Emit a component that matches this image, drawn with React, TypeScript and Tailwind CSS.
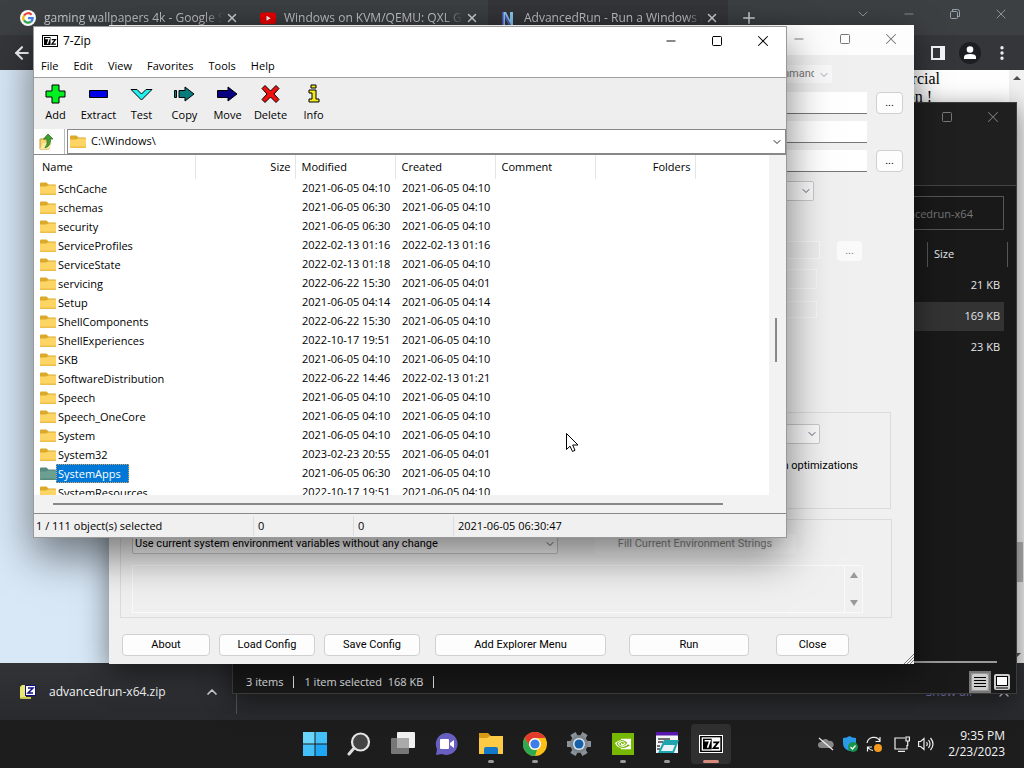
import React from 'react';
import { ArrowLeft, ChevronDown, ChevronUp, Minus, MoreVertical, Plus, Square, X } from 'lucide-react';
import { SiNvidia } from 'react-icons/si';

const browserTabs = [
  { title: 'gaming wallpapers 4k - Google S', icon: 'google', active: false },
  { title: 'Windows on KVM/QEMU: QXL G', icon: 'youtube', active: false },
  { title: 'AdvancedRun - Run a Windows p', icon: 'nirsoft', active: true }
];

const menus = ['File', 'Edit', 'View', 'Favorites', 'Tools', 'Help'];

const folders = [
  { name: 'SchCache', modified: '2021-06-05 04:10', created: '2021-06-05 04:10' },
  { name: 'schemas', modified: '2021-06-05 06:30', created: '2021-06-05 04:10' },
  { name: 'security', modified: '2021-06-05 06:30', created: '2021-06-05 04:10' },
  { name: 'ServiceProfiles', modified: '2022-02-13 01:16', created: '2022-02-13 01:16' },
  { name: 'ServiceState', modified: '2022-02-13 01:18', created: '2021-06-05 04:10' },
  { name: 'servicing', modified: '2022-06-22 15:30', created: '2021-06-05 04:01' },
  { name: 'Setup', modified: '2021-06-05 04:14', created: '2021-06-05 04:14' },
  { name: 'ShellComponents', modified: '2022-06-22 15:30', created: '2021-06-05 04:10' },
  { name: 'ShellExperiences', modified: '2022-10-17 19:51', created: '2021-06-05 04:10' },
  { name: 'SKB', modified: '2021-06-05 04:10', created: '2021-06-05 04:10' },
  { name: 'SoftwareDistribution', modified: '2022-06-22 14:46', created: '2022-02-13 01:21' },
  { name: 'Speech', modified: '2021-06-05 04:10', created: '2021-06-05 04:10' },
  { name: 'Speech_OneCore', modified: '2021-06-05 04:10', created: '2021-06-05 04:10' },
  { name: 'System', modified: '2021-06-05 04:10', created: '2021-06-05 04:10' },
  { name: 'System32', modified: '2023-02-23 20:55', created: '2021-06-05 04:01' },
  { name: 'SystemApps', modified: '2021-06-05 06:30', created: '2021-06-05 04:10', selected: true },
  { name: 'SystemResources', modified: '2022-10-17 19:51', created: '2021-06-05 04:10' }
];

const GoogleIcon = () => (
  <svg viewBox="0 0 16 16" className="h-4 w-4 shrink-0">
    <circle cx="8" cy="8" r="8" fill="#fff" />
    <g fill="none" strokeWidth="2.2">
      <path d="M11.6 4.8A4.7 4.7 0 0 0 4 5.6" stroke="#ea4335" />
      <path d="M4 5.5a4.7 4.7 0 0 0 0 5" stroke="#fbbc05" />
      <path d="M4 10.4a4.7 4.7 0 0 0 7 1.2" stroke="#34a853" />
      <path d="M8 8.2h4.7a4.7 4.7 0 0 1-1.7 3.4" stroke="#4285f4" />
    </g>
  </svg>
);

const YoutubeIcon = () => (
  <svg viewBox="0 0 16 16" className="h-4 w-4 shrink-0">
    <rect y="2.5" width="16" height="11.5" rx="3" fill="#f00000" />
    <path d="M6.5 5.8v5L10.7 8.3z" fill="#fff" />
  </svg>
);

const NirsoftIcon = () => (
  <svg viewBox="0 0 16 16" className="h-4 w-4 shrink-0">
    <path d="M2 15V2h4l4 8V2h3v13h-4L5 7.500V15z" fill="#8cc8f4" />
    <path d="M2 15V2h1.500v13zM5 7.500V4l6 11H9z" fill="#4a55b8" />
  </svg>
);

const SevenZipIcon = ({ className }: { className: string }) => (
  <svg viewBox="0 0 16 12" className={className}>
    <rect width="16" height="12" fill="#000" />
    <rect x="1" y="1" width="14" height="10" fill="#fff" />
    <rect x="2" y="2" width="6.5" height="8" fill="#000" />
    <path d="M3.2 3.6h4l-1.8 5.2" fill="none" stroke="#fff" strokeWidth="1.2" />
    <path d="M9.7 4.7h3.7l-3.5 4.4h4" fill="none" stroke="#000" strokeWidth="1.3" />
  </svg>
);

const FolderIcon = ({ selected = false }: { selected?: boolean }) => (
  <svg viewBox="0 0 16 13" className="h-[13px] w-4 shrink-0">
    <path d="M0 1.500Q0 .5 1 .5h5.500l2 2H15q1 0 1 1V6H0z" fill={selected ? '#568b80' : '#dda92a'} />
    <path d="M0 4.500h6l2-1h8V12q0 1-1 1H1q-1 0-1-1z" fill={selected ? '#6ba091' : '#fcd564'} />
    <path d="M0 11.500h16V12q0 1-1 1H1q-1 0-1-1z" fill={selected ? '#558a7c' : '#efbd49'} />
  </svg>
);

const tools = [
  { label: 'Add', icon: <path d="M11 1h7v6h6v6h-6v6h-7v-6H5V7h6z" fill="#00f020" /> },
  { label: 'Extract', icon: <path d="M5.500 6.500h18v7h-18z" fill="#0000e8" /> },
  { label: 'Test', icon: <path d="M4 5.500h6l4.500 4.500L19 5.500h6L14.500 16z" fill="#20f0f0" /> },
  { label: 'Copy', icon: <path d="M4.500 6.500h2v7h-2zM9 6.500h6V3l9 7-9 7v-3.500H9z" fill="#087c7c" /> },
  { label: 'Move', icon: <path d="M4.500 6.500H15V3l9 7-9 7v-3.500H4.500z" fill="#080080" /> },
  { label: 'Delete', icon: <path d="M6 4.500l3-3 5.500 5.500L20 1.500l3 3-5 5.500 5 5.500-3 3-5.500-5.500L9 18.500l-3-3 5-5.500z" fill="#f01010" /> },
  { label: 'Info', icon: <path d="M12 1h5v3h-5zM10 6h7v9h3v3H10v-3h3V9h-3z" fill="#f0e820" /> }
];

const WindowButtons = ({ muted = false }: { muted?: boolean }) => (
  <div className={`flex ${muted ? 'text-[#777]' : 'text-black'}`}>
    <button aria-label="Minimize" className="flex h-7 w-[46px] items-center justify-center">
      <Minus className="h-3.5 w-3.5" strokeWidth={1.6} />
    </button>
    <button aria-label="Maximize" className="flex h-7 w-[46px] items-center justify-center">
      <Square className="h-3 w-3" strokeWidth={2} />
    </button>
    <button aria-label="Close" className="flex h-7 w-[46px] items-center justify-center">
      <X className="h-[18px] w-[18px]" strokeWidth={1.4} />
    </button>
  </div>
);

const Browser: React.FC = () => (
  <div className="flex min-h-0 flex-1 flex-col bg-[#35363a]">
    <header className="flex h-[35px] shrink-0 justify-between bg-[#3c4043] pl-2">
      <div className="flex">
        {browserTabs.map((tab) => (
          <div
            key={tab.title}
            className={`flex w-60 items-center pr-[9px] pl-3 ${tab.active ? 'bg-[#35363a]' : ''}`}
          >
            {tab.icon === 'google' && <GoogleIcon />}
            {tab.icon === 'youtube' && <YoutubeIcon />}
            {tab.icon === 'nirsoft' && <NirsoftIcon />}
            <span className="ml-2 flex-1 overflow-hidden mask-r-from-90% text-xs whitespace-nowrap text-[#c4c7ca]">
              {tab.title}
            </span>
            <button aria-label="Close tab" className="ml-0.5 text-gray-300">
              <X className="h-3.5 w-3.5" strokeWidth={2.5} />
            </button>
          </div>
        ))}
        <button aria-label="New tab" className="ml-3 text-gray-300">
          <Plus className="h-[18px] w-[18px]" />
        </button>
      </div>
      <div className="flex h-7 text-gray-400">
        <button aria-label="Search tabs" className="flex w-[46px] items-center justify-center">
          <ChevronDown className="h-4 w-4" strokeWidth={1.3} />
        </button>
        <button aria-label="Minimize browser" className="flex w-[46px] items-center justify-center">
          <Minus className="h-3.5 w-3.5" strokeWidth={1.3} />
        </button>
        <button aria-label="Restore browser" className="flex w-[46px] items-center justify-center">
          <svg viewBox="0 0 10 10" className="h-2.5 w-2.5" fill="none" stroke="currentColor">
            <path d="M2.500 2V.5h5q2 0 2 2v5H8" />
            <rect x=".5" y="2.5" width="7" height="7" rx="1" />
          </svg>
        </button>
        <button aria-label="Close browser" className="flex w-[46px] items-center justify-center">
          <X className="h-4 w-4" strokeWidth={1.3} />
        </button>
      </div>
    </header>

    <div className="flex h-[35px] shrink-0 items-center justify-between pr-1.5 pl-3 text-gray-100">
      <button aria-label="Back">
        <ArrowLeft className="h-5 w-5" strokeWidth={2.5} />
      </button>
      <div className="flex">
        <button aria-label="Side panel" className="flex w-8 items-center justify-center">
          <svg viewBox="0 0 14 14" className="h-3.5 w-3.5">
            <path d="M0 0h14v14H0zM2 2v10h7V2z" fill="currentColor" fillRule="evenodd" />
          </svg>
        </button>
        <button aria-label="Profile" className="flex w-8 items-center justify-center">
          <svg viewBox="0 0 22 22" className="h-[22px] w-[22px]">
            <circle cx="11" cy="11" r="11" fill="#1d1e21" />
            <circle cx="11" cy="7.5" r="3.3" fill="#fff" />
            <path d="M5 17v-2q0-3 6-3t6 3v2z" fill="#fff" />
          </svg>
        </button>
        <button aria-label="Browser menu" className="flex w-8 items-center justify-center">
          <MoreVertical className="h-[18px] w-[18px]" strokeWidth={2.5} />
        </button>
      </div>
    </div>

    <div className="flex min-h-0 flex-1 bg-white">
      <div className="w-40 shrink-0 bg-[#d8e8f7]" />
      <div className="flex-1 pr-[69px] text-right font-['Liberation_Serif',serif] text-base leading-[18px] text-black">
        <p>commercial</p>
        <p className="pr-2">on !</p>
      </div>
      <div className="flex w-[15px] flex-col items-center justify-between bg-[#f1f1f1] py-1.5">
        <svg viewBox="0 0 8 4" className="h-1 w-2">
          <path d="M0 4l4-4 4 4z" fill="#505050" />
        </svg>
        <div className="mt-[462px] h-10 w-3 bg-[#b4b4b4]" />
        <svg viewBox="0 0 8 4" className="mt-auto h-1 w-2">
          <path d="M0 0l4 4 4-4z" fill="#505050" />
        </svg>
      </div>
    </div>

    <footer className="flex h-[57px] shrink-0 items-center justify-between bg-linear-to-b from-[#323336] to-[#292a2d] pr-3">
      <div className="flex h-11 w-[237px] items-center border-r border-[#55565a] pr-4 pl-5">
        <svg viewBox="0 0 16 14" className="h-3.5 w-4">
          <path d="M0 2l2-2h4v12H2l-2 2z" fill="#e8e870" />
          <path d="M1 12h10v2H1z" fill="#c8c850" />
          <rect x="5.5" y=".5" width="10" height="10" fill="#fff" stroke="#101080" />
          <path d="M8 3h5L8 8h5" fill="none" stroke="#101080" strokeWidth="1.5" />
        </svg>
        <span className="ml-[13px] flex-1 text-xs text-gray-100">advancedrun-x64.zip</span>
        <button aria-label="Download options" className="text-gray-300">
          <ChevronUp className="h-4 w-4" strokeWidth={2.5} />
        </button>
      </div>
      <div className="flex items-center gap-6">
        <button className="text-xs text-[#8c8cd0]">Show all</button>
        <button aria-label="Close downloads" className="text-gray-300">
          <X className="h-4 w-4" />
        </button>
      </div>
    </footer>
  </div>
);

const ExplorerWindow: React.FC = () => (
  <section className="absolute top-[102px] left-[232px] flex h-[592px] w-[785px] flex-col border border-[#3c3c3c] bg-[#191919] text-[11px] text-gray-200 shadow-[0_6px_24px_rgba(0,0,0,0.5)]">
    <div className="flex h-[83px] shrink-0 items-start justify-end border-b border-[#444] bg-[#1f1f1f]">
      <WindowButtons muted />
    </div>
    <div className="flex justify-end px-3 pt-2.5 pb-[9px]">
      <input
        aria-label="Search folder"
        placeholder="Search advancedrun-x64"
        className="h-[34px] w-[180px] border border-[#555] bg-[#191919] pl-[21px] placeholder:text-[#777]"
      />
    </div>
    <table className="w-full table-fixed">
      <thead>
        <tr className="h-[31px]">
          <th />
          <th className="w-[89px]">
            <div className="mr-2 border-x border-[#555] py-1 pl-1.5 text-left font-normal">Size</div>
          </th>
        </tr>
      </thead>
      <tbody className="text-right">
        <tr className="h-[31px]">
          <td />
          <td className="pr-4">21 KB</td>
        </tr>
        <tr className="h-[31px]">
          <td colSpan={2} className="pr-3">
            <div className="bg-[#333] py-1.5 pr-1">169 KB</div>
          </td>
        </tr>
        <tr className="h-[31px]">
          <td />
          <td className="pr-4">23 KB</td>
        </tr>
      </tbody>
    </table>
    <div className="mt-auto mr-[19px] ml-60 h-0.5 shrink-0 bg-[#999]" />
    <div className="flex h-[30px] shrink-0 items-center justify-between pt-2 pr-1.5 pl-[13px]">
      <div className="flex items-center gap-2.5">
        <span>3 items</span>
        <span className="h-3 w-px bg-gray-200" />
        <span>1 item selected&nbsp; 168 KB</span>
        <span className="h-3 w-px bg-gray-200" />
      </div>
      <div className="flex items-center gap-[3px]">
        <button aria-label="Details view" className="border-2 border-[#777] bg-[#999]">
          <svg viewBox="0 0 18 18" className="h-[18px] w-[18px]">
            <rect x="1" y="1" width="16" height="16" rx="2" fill="#ccc" />
            <path d="M3 4.500h12M3 7.500h12M3 10.500h12M3 13.500h12" stroke="#000" />
          </svg>
        </button>
        <button aria-label="Large icons view">
          <svg viewBox="0 0 16 16" className="h-4 w-4">
            <rect width="16" height="16" rx="2" fill="#ccc" />
            <rect x="2.5" y="2.5" width="11" height="9" fill="#fff" stroke="#000" />
            <path d="M2 14h12" stroke="#000" />
          </svg>
        </button>
      </div>
    </div>
  </section>
);

const Select = ({ label, value, className }: { label: string; value: string; className: string }) => (
  <div className={`relative h-5 ${className}`}>
    <select
      aria-label={label}
      className="h-full w-full appearance-none rounded-xs border border-[#c8c8c8] bg-[#fafafa] pr-5 pl-0.5"
    >
      <option>{value}</option>
    </select>
    <ChevronDown className="pointer-events-none absolute top-1 right-0.5 h-3 w-3 text-gray-700" strokeWidth={1.7} />
  </div>
);

const dialogInput = 'h-[22px] w-[340px] border-b border-[#777] bg-white px-1';
const dialogButton = 'h-[22px] rounded border border-[#d0d0d0] bg-[#fdfdfd]';

const AdvancedRunWindow: React.FC = () => (
  <section className="absolute top-[25px] left-[109px] flex h-[639px] w-[805px] flex-col bg-[#f0f0f0] font-[Roboto,sans-serif] text-[11px] text-black shadow-[0_8px_28px_rgba(0,0,0,0.5)]">
    <div className="flex h-[30px] shrink-0 justify-end bg-[#fdfdfd]">
      <WindowButtons muted />
    </div>
    <div className="flex flex-1 flex-col pr-[11px]">
      <div className="relative mt-[10px] mr-[71px] h-[18px] w-[70px] self-end">
        <select
          aria-label="Run mode"
          disabled
          className="h-full w-full appearance-none rounded-xs bg-[#f8f8f8] pr-[18px] pl-1 text-[#777]"
        >
          <option>Command</option>
        </select>
        <ChevronDown className="absolute top-1 right-0.5 h-3 w-3 text-gray-400" />
      </div>
      <div className="mt-[9px] flex justify-end gap-[9px]">
        <input aria-label="Program to run" className={dialogInput} />
        <button className={`${dialogButton} w-[27px]`}>...</button>
      </div>
      <div className="mt-[7px] mr-9 flex justify-end">
        <input aria-label="Command-line arguments" className={dialogInput} />
      </div>
      <div className="mt-[7px] flex justify-end gap-[9px]">
        <input aria-label="Start directory" className={dialogInput} />
        <button className={`${dialogButton} w-[27px]`}>...</button>
      </div>
      <Select label="Process priority" value="Normal" className="mt-[9px] mr-[89px] w-60 self-end" />
      <div className="mt-10 mr-[41px] flex justify-end gap-[17px]">
        <input aria-label="Run as user" disabled className="h-[18px] w-60 border border-[#f8f8f8] bg-[#eeeeee]" />
        <button disabled className="h-5 w-[25px] rounded bg-[#fafafa] text-[#777]">...</button>
      </div>
      <input aria-label="User name" disabled className="mt-2 mr-[86px] h-5 w-60 self-end border border-[#f8f8f8]" />
      <input aria-label="Password" disabled className="mt-3 mr-[86px] h-[17px] w-60 self-end border border-[#f8f8f8]" />

      <fieldset className="mt-[94px] mr-3 ml-[11px] flex h-[97px] flex-col items-end border border-[#dcdcdc]">
        <Select label="Compatibility mode" value="Windows 7" className="mt-[11px] mr-[70px] w-60" />
        <label className="mt-3.5 mr-8 flex items-center gap-1">
          <input type="checkbox" className="h-3 w-3" />
          Disable full screen optimizations
        </label>
      </fieldset>

      <fieldset className="mt-[10px] mr-[11px] ml-[11px] h-[99px] border border-[#dcdcdc] px-[11px] pt-[14px]">
        <div className="flex gap-9">
          <Select
            label="Environment variables"
            value="Use current system environment variables without any change"
            className="w-[426px]"
          />
          <button disabled className="h-5 w-[202px] rounded bg-[#f5f5f5] text-[#888]">
            Fill Current Environment Strings
          </button>
        </div>
        <div className="mt-[11px] mr-[17px] flex h-12 border border-[#fafafa]">
          <textarea aria-label="Environment strings" disabled className="h-full flex-1 resize-none" />
          <div className="flex w-[18px] flex-col items-center justify-between border-l border-[#fafafa] py-1.5">
            <svg viewBox="0 0 8 6" className="h-1.5 w-2">
              <path d="M0 6l4-6 4 6z" fill="#999" />
            </svg>
            <svg viewBox="0 0 8 6" className="h-1.5 w-2">
              <path d="M0 0l4 6 4-6z" fill="#999" />
            </svg>
          </div>
        </div>
      </fieldset>

      <div className="mt-4 flex pl-[13px]">
        <button className={`${dialogButton} w-[88px]`}>About</button>
        <button className={`${dialogButton} ml-[9px] w-24`}>Load Config</button>
        <button className={`${dialogButton} ml-[9px] w-24`}>Save Config</button>
        <button className={`${dialogButton} ml-[15px] w-[171px]`}>Add Explorer Menu</button>
        <button className={`${dialogButton} ml-[23px] w-[120px]`}>Run</button>
        <button className={`${dialogButton} ml-[27px] w-[73px]`}>Close</button>
      </div>
    </div>
    <svg viewBox="0 0 10 10" className="absolute right-0 bottom-0 h-2.5 w-2.5">
      <path d="M0 10L10 0M3 10l7-7M6 10l4-4" stroke="#777" />
    </svg>
  </section>
);

const SevenZipWindow: React.FC = () => (
  <section className="absolute top-[26px] left-[33px] flex h-[512px] w-[754px] flex-col border border-[#999] bg-white text-[11px] text-black shadow-[0_18px_40px_rgba(0,0,0,0.5)]">
    <div className="flex h-7 shrink-0 items-center justify-between pl-2">
      <div className="flex items-center gap-[5px]">
        <SevenZipIcon className="h-3 w-4" />
        <h1 className="text-xs">7-Zip</h1>
      </div>
      <WindowButtons />
    </div>
    <nav className="flex h-[22px] shrink-0 items-center gap-[15px] pt-px pl-[7px]">
      {menus.map((menu) => (
        <button key={menu}>{menu}</button>
      ))}
    </nav>

    <div className="flex h-[52px] shrink-0 border-t border-[#a0a0a0] bg-[#eeeeee]">
      {tools.map((tool) => (
        <button key={tool.label} className="flex w-[43px] flex-col items-center pt-1.5 whitespace-nowrap">
          <svg viewBox="0 0 29 20" className="h-5 w-[29px]" stroke="#000" strokeWidth="1">
            {tool.icon}
          </svg>
          <span className="mt-0.5 leading-[18px]">{tool.label}</span>
        </button>
      ))}
    </div>

    <div className="flex h-[25px] shrink-0 gap-0.5">
      <button aria-label="Up one level" className="flex w-[31px] items-center border-r border-[#bbb] pl-[5px]">
        <svg viewBox="0 0 16 16" className="h-4 w-4">
          <path d="M1 5h4l1 1h4v9H1z" fill="#f4d77a" stroke="#c99a2c" />
          <path d="M4 9h9l-3 6H1z" fill="#fbe9a0" />
          <path d="M9 0l5 5h-2.500q.5 7-5.500 9 3-4 2-9H4.500z" fill="#3fa02f" stroke="#246a1c" strokeWidth=".7" />
        </svg>
      </button>
      <div className="relative flex flex-1 items-center border border-[#888] pl-0.5">
        <FolderIcon />
        <select aria-label="Path" className="flex-1 appearance-none pl-[5px]">
          <option>C:\Windows\</option>
        </select>
        <ChevronDown className="pointer-events-none absolute right-0.5 h-3 w-3" strokeWidth={1.7} />
      </div>
    </div>

    <div className="flex min-h-0 flex-1 border-y border-y-[#888]">
      <div className="flex min-w-0 flex-1 flex-col">
        <div className="min-h-0 flex-1 overflow-hidden">
          <table className="w-full table-fixed">
            <thead>
              <tr className="h-6 text-left [&>th]:border-r [&>th]:border-[#e5e5e5] [&>th]:px-1.5 [&>th]:font-normal">
                <th className="w-[161px] pl-2!">Name</th>
                <th className="w-[100px] pr-1! text-right">Size</th>
                <th className="w-[100px]">Modified</th>
                <th className="w-[100px]">Created</th>
                <th className="w-[100px]">Comment</th>
                <th className="w-[100px] pr-1! text-right">Folders</th>
                <th className="border-0!" />
              </tr>
            </thead>
            <tbody>
              {folders.map((folder) => (
                <tr key={folder.name} className="h-[19px] whitespace-nowrap">
                  <td className="pl-1.5">
                    <div className="flex items-center">
                      <FolderIcon selected={folder.selected} />
                      <span
                        className={
                          folder.selected
                            ? 'bg-[#0078d7] pr-2 pl-0.5 leading-[19px] text-white outline-1 -outline-offset-1 outline-[#e0a060] outline-dotted'
                            : 'pl-0.5 leading-[19px]'
                        }
                      >
                        {folder.name}
                      </span>
                    </div>
                  </td>
                  <td />
                  <td className="pl-[7px]">{folder.modified}</td>
                  <td className="pl-[7px]">{folder.created}</td>
                  <td colSpan={3} />
                </tr>
              ))}
            </tbody>
          </table>
        </div>
        <div className="h-[18px] shrink-0 bg-[#f2f2f2] pt-2 pr-[46px] pl-[19px]">
          <div className="h-0.5 bg-[#888]" />
        </div>
      </div>
      <div className="w-[17px] bg-[#f2f2f2] pt-[163px] pl-1.5">
        <div className="h-11 w-0.5 bg-[#888]" />
      </div>
    </div>

    <footer className="flex h-[23px] shrink-0 items-center bg-[#f0f0f0] pl-0.5 [&>span]:leading-5">
      <span className="w-[218px] border-r border-[#ddd]">1 / 111 object(s) selected</span>
      <span className="w-[100px] border-r border-[#ddd] pl-1">0</span>
      <span className="w-[100px] border-r border-[#ddd] pl-1">0</span>
      <span className="pl-1">2021-06-05 06:30:47</span>
    </footer>
  </section>
);

const taskbarApps = [
  {
    name: 'Start',
    icon: (
      <g>
        <path d="M0 0h11.500v11.500H0z" fill="#6ad6fb" />
        <path d="M12.500 0H24v11.500H12.500zM0 12.500h11.500V24H0z" fill="#44c0f8" />
        <path d="M12.500 12.500H24V24H12.500z" fill="#1ea6f4" />
      </g>
    )
  },
  {
    name: 'Search',
    icon: (
      <g>
        <path d="M8 15l-6 7" stroke="#ddd" strokeWidth="3" strokeLinecap="round" />
        <circle cx="13.5" cy="10" r="8.5" fill="#444" stroke="#e4e4e4" strokeWidth="2.2" />
      </g>
    )
  },
  {
    name: 'Task view',
    icon: (
      <g>
        <rect x="6" y="0" width="18" height="16" rx="1" fill="#f0f0f0" />
        <rect x="0" y="6" width="18" height="16" rx="1" fill="#777" />
        <path d="M6 6h12v10H6z" fill="#aaa" />
      </g>
    )
  },
  {
    name: 'Chat',
    icon: (
      <g>
        <path d="M12 1a11 11 0 1 1-5 21l-6 1 1-6A11 11 0 0 1 12 1z" fill="#6860c0" />
        <rect x="5" y="7" width="9" height="10" rx="1" fill="#fff" />
        <path d="M15 11l4-3v8l-4-3z" fill="#fff" />
      </g>
    )
  },
  {
    name: 'File Explorer',
    running: true,
    icon: (
      <g>
        <path d="M0 1h9l3 3h11q1 0 1 1v5H0z" fill="#d99a15" />
        <path d="M0 6h8l3-2h13v18H0z" fill="#fcca45" />
        <path d="M5 22v-5q0-2 2-2h10q2 0 2 2v5z" fill="#1378c8" />
      </g>
    )
  },
  {
    name: 'Chrome',
    running: true,
    icon: (
      <g>
        <circle cx="12" cy="12" r="12" fill="#fbc116" />
        <path d="M1.600 6A12 12 0 0 1 22.400 6H12a6 6 0 0 0-5.200 9z" fill="#e33b2e" />
        <path d="M1.600 6l5.200 9a6 6 0 0 0 5.200 3l2-.3L12 24A12 12 0 0 1 1.600 6z" fill="#2da94f" />
        <circle cx="12" cy="12" r="6" fill="#fff" />
        <circle cx="12" cy="12" r="4.6" fill="#3f7ee8" />
      </g>
    )
  },
  {
    name: 'Settings',
    icon: (
      <g>
        <g stroke="#8a929a" strokeWidth="6">
          <path d="M0 12h24M6 1.600l12 20.800M18 1.600L6 22.400" />
        </g>
        <circle cx="12" cy="12" r="9" fill="#7d858d" />
        <circle cx="12" cy="12" r="6" fill="#dce6f0" />
        <circle cx="12" cy="12" r="4.5" fill="#1560a8" />
      </g>
    )
  },
  {
    name: 'NVIDIA',
    running: true,
    icon: (
      <g>
        <rect x="1" y="1" width="22" height="22" fill="#76b900" />
        <SiNvidia x="4" y="4" width="16" height="16" color="#fff" />
      </g>
    )
  },
  {
    name: 'AdvancedRun',
    running: true,
    icon: (
      <g>
        <path d="M1 0h22v21H1z" fill="#f4f4f8" />
        <path d="M1 0h22v3.500H1z" fill="#5a18b0" />
        <path d="M3 7h12M3 10h5M2 14h3M2 17h3" stroke="#444" strokeWidth="1.500" />
        <path d="M9 8h15l-5 13H3l4-9z" fill="#1fa5ae" />
        <path d="M9 13h11l-2.500 6H6z" fill="#e8f4fa" />
      </g>
    )
  },
  { name: '7-Zip', running: true, active: true, icon: null }
];

const Taskbar: React.FC = () => (
  <footer className="grid h-12 shrink-0 grid-cols-[1fr_auto_1fr] items-center bg-[#1d1d1e] text-gray-100">
    <div />
    <div className="flex gap-1 pl-0.5">
      {taskbarApps.map((app) => (
        <button
          key={app.name}
          aria-label={app.name}
          className={`flex h-10 w-10 flex-col items-center rounded pt-2 ${app.active ? 'bg-[#303030]' : ''}`}
        >
          {app.active ? (
            <span className="flex h-6 items-center">
              <SevenZipIcon className="h-[18px] w-6 border border-white" />
            </span>
          ) : (
            <svg viewBox="0 0 24 24" className="h-6 w-6">
              {app.icon}
            </svg>
          )}
          {app.running && (
            <span
              className={
                app.active ? 'mt-1 h-[3px] w-4 rounded-full bg-[#d88a7c]' : 'mt-1 h-[3px] w-1.5 rounded-full bg-[#999]'
              }
            />
          )}
        </button>
      ))}
    </div>
    <div className="flex items-center justify-end pr-[19px]">
      <div className="flex items-center gap-2">
        <svg viewBox="0 0 16 16" className="h-4 w-4">
          <path d="M3 12a3 3 0 0 1 0-6 4.500 4.500 0 0 1 8-1 3.500 3.500 0 0 1 2 7z" fill="#888" />
          <path d="M1 2l14 12" stroke="#eee" strokeWidth="1.2" />
        </svg>
        <svg viewBox="0 0 16 16" className="h-4 w-4">
          <path d="M7.500 0Q10 2 14 2v5q0 6-6.500 8Q1 13 1 7V2q4 0 6.500-2z" fill="#2a9be8" />
          <circle cx="11" cy="11" r="5" fill="#18934a" />
          <path d="M8.500 11l2 2 3-3.500" fill="none" stroke="#fff" strokeWidth="1.2" />
        </svg>
        <svg viewBox="0 0 16 16" className="h-4 w-4" fill="none" stroke="#eee" strokeWidth="1.2">
          <path d="M1 7a7 7 0 0 1 13-2M14 1v4.500h-4.500M7 14.500a7 7 0 0 1-5-3M1.500 15.500V11H6" />
          <circle cx="12" cy="12" r="4" fill="#f59a1c" stroke="none" />
        </svg>
        <svg viewBox="0 0 16 16" className="ml-1 h-4 w-4" fill="none" stroke="#eee" strokeWidth="1.2">
          <path d="M11 2H1v11h12V9M4 15.400h7M12 1h3.400v4H12zM13.700 5v5" />
        </svg>
        <svg viewBox="0 0 16 16" className="h-4 w-4" fill="none" stroke="#eee" strokeWidth="1.2">
          <path d="M.6 5.500h2L6 2.500v11l-3.400-3h-2zM8.500 6q1.500 2 0 4M10.500 4q3 4 0 8M12.500 2q5 6 0 12" />
        </svg>
      </div>
      <div className="ml-3.5 text-right text-xs leading-4">
        <div>9:35 PM</div>
        <div>2/23/2023</div>
      </div>
    </div>
  </footer>
);

const App: React.FC = () => (
  <div className="relative flex h-screen flex-col overflow-hidden bg-[#202124] font-['Open_Sans',sans-serif] select-none">
    <Browser />
    <ExplorerWindow />
    <AdvancedRunWindow />
    <SevenZipWindow />
    <Taskbar />
    {/* mouse pointer */}
    <svg viewBox="0 0 13 20" className="absolute top-[433px] left-[566px] h-5 w-[13px]">
      <path d="M.5 .5v16l3.500-3.300 2.500 5.300 2.500-1.200L6.700 12H12z" fill="#fff" stroke="#000" />
    </svg>
  </div>
);

export default App;
